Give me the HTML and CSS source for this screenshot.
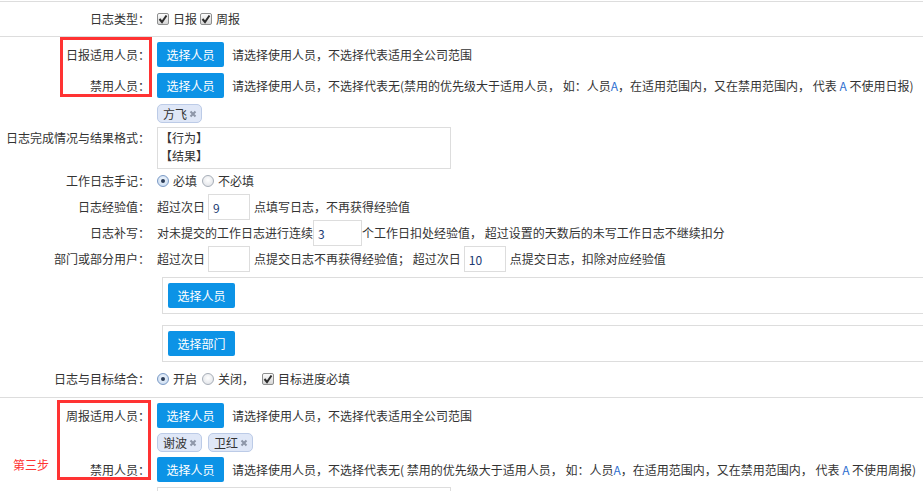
FILE: index.html
```html
<!DOCTYPE html>
<html lang="zh-CN">
<head>
    <meta charset="UTF-8">
    <meta name="viewport" content="width=device-width, initial-scale=1.0">
    <title>日志设置</title>
    <link rel="stylesheet" href="styles.css">
</head>
<body>
<div class="page">

    <!-- 日志类型 -->
    <div class="sec sec-type">
        <div class="row">
            <div class="label">日志类型：</div>
            <div class="field">
                <span class="cb"><svg viewBox="0 0 10 10"><path d="M1.5 5 L4 8 L8.5 1.5"/></svg></span>
                <span class="opt">日报</span>
                <span class="cb cb-next"><svg viewBox="0 0 10 10"><path d="M1.5 5 L4 8 L8.5 1.5"/></svg></span>
                <span class="opt">周报</span>
            </div>
        </div>
    </div>

    <!-- 日报设置 -->
    <div class="sec sec-daily">
        <div class="mark mark-daily"></div>

        <div class="row row-btn">
            <div class="label">日报适用人员：</div>
            <div class="field">
                <button class="btn">选择人员</button>
                <span class="hint">请选择使用人员，不选择代表适用全公司范围</span>
            </div>
        </div>

        <div class="row row-btn">
            <div class="label">禁用人员：</div>
            <div class="field">
                <button class="btn">选择人员</button>
                <span class="hint">请选择使用人员，不选择代表无(禁用的优先级大于适用人员， 如：人员<span class="a">A</span>，在适用范围内，又在禁用范围内， 代表 <span class="a">A</span> 不使用日报)</span>
            </div>
        </div>

        <div class="row row-tags">
            <div class="label"></div>
            <div class="field">
                <span class="tag">方飞<svg viewBox="0 0 8 8"><path d="M1.5 1.5 L6.5 6.5 M6.5 1.5 L1.5 6.5"/></svg></span>
            </div>
        </div>

        <div class="row row-text">
            <div class="label">日志完成情况与结果格式：</div>
            <div class="field">
                <textarea class="area">【行为】
【结果】</textarea>
            </div>
        </div>

        <div class="row row-radio">
            <div class="label">工作日志手记：</div>
            <div class="field">
                <span class="radio on"></span><span class="opt">必填</span>
                <span class="radio radio-next"></span><span class="opt">不必填</span>
            </div>
        </div>

        <div class="row row-input">
            <div class="label">日志经验值：</div>
            <div class="field">
                超过次日<input class="num" type="text" value="9">点填写日志，不再获得经验值
            </div>
        </div>

        <div class="row row-input">
            <div class="label">日志补写：</div>
            <div class="field">
                对未提交的工作日志进行连续<input class="num num-wide" type="text" value="3">个工作日扣处经验值， 超过设置的天数后的未写工作日志不继续扣分
            </div>
        </div>

        <div class="row row-input row-last-input">
            <div class="label">部门或部分用户：</div>
            <div class="field">
                超过次日<input class="num" type="text" value="">点提交日志不再获得经验值； 超过次日<input class="num" type="text" value="10">点提交日志，扣除对应经验值
            </div>
        </div>

        <div class="row row-box">
            <div class="label"></div>
            <div class="field">
                <div class="pick-box"><button class="btn">选择人员</button></div>
            </div>
        </div>

        <div class="row row-box">
            <div class="label"></div>
            <div class="field">
                <div class="pick-box"><button class="btn">选择部门</button></div>
            </div>
        </div>

        <div class="row row-goal">
            <div class="label">日志与目标结合：</div>
            <div class="field">
                <span class="radio on"></span><span class="opt">开启</span>
                <span class="radio radio-next"></span><span class="opt">关闭，</span>
                <span class="cb cb-goal"><svg viewBox="0 0 10 10"><path d="M1.5 5 L4 8 L8.5 1.5"/></svg></span>
                <span class="opt">目标进度必填</span>
            </div>
        </div>
    </div>

    <!-- 周报设置 -->
    <div class="sec sec-weekly">
        <div class="mark mark-weekly"></div>
        <div class="step">第三步</div>

        <div class="row row-btn">
            <div class="label">周报适用人员：</div>
            <div class="field">
                <button class="btn">选择人员</button>
                <span class="hint">请选择使用人员，不选择代表适用全公司范围</span>
            </div>
        </div>

        <div class="row row-tags">
            <div class="label"></div>
            <div class="field">
                <span class="tag">谢波<svg viewBox="0 0 8 8"><path d="M1.5 1.5 L6.5 6.5 M6.5 1.5 L1.5 6.5"/></svg></span>
                <span class="tag">卫红<svg viewBox="0 0 8 8"><path d="M1.5 1.5 L6.5 6.5 M6.5 1.5 L1.5 6.5"/></svg></span>
            </div>
        </div>

        <div class="row row-btn">
            <div class="label">禁用人员：</div>
            <div class="field">
                <button class="btn">选择人员</button>
                <span class="hint">请选择使用人员，不选择代表无( 禁用的优先级大于适用人员， 如：人员<span class="a">A</span>，在适用范围内，又在禁用范围内， 代表 <span class="a">A</span> 不使用周报)</span>
            </div>
        </div>

        <div class="row row-text">
            <div class="label"></div>
            <div class="field">
                <textarea class="area"></textarea>
            </div>
        </div>
    </div>

</div>
</body>
</html>
```

FILE: styles.css
```css
* {
    box-sizing: border-box;
}

body {
    margin: 0;
    font: 12px/18px "Noto Sans CJK SC", "Liberation Sans", sans-serif;
    color: #333;
    background: #fff;
    overflow: hidden;
}

.page {
    position: relative;
    width: 923px;
    height: 491px;
    overflow: hidden;
}

/* 分段 */
.sec {
    border-bottom: 1px solid #ddd;
}

.sec-type {
    margin-top: 1px;
    border-top: 1px solid #ddd;
    height: 36px;
    display: flex;
    align-items: center;
}

.sec-daily {
    padding: 5px 0 7px;
}

.sec-weekly {
    padding-top: 5px;
    border-bottom: none;
}

/* 行 */
.row {
    display: flex;
    align-items: center;
}

.label {
    width: 150px;
    flex-shrink: 0;
    text-align: right;
    white-space: nowrap;
}

.field {
    margin-left: 7px;
    display: flex;
    align-items: center;
    white-space: nowrap;
}

.row-btn {
    height: 25px;
    margin-bottom: 6px;
}

.sec-weekly .row-btn {
    margin-bottom: 5px;
}

.sec-weekly .row-btn + .row-text {
    margin-top: 1px;
}

.row-tags {
    height: 19px;
    margin-bottom: 4px;
}

.sec-weekly .row-tags {
    margin-bottom: 5px;
}

.row-text {
    align-items: flex-start;
    margin-bottom: 3px;
}

.row-text .label {
    padding-top: 2px;
}

.row-radio {
    height: 18px;
    margin-bottom: 4px;
}

.row-input {
    height: 26px;
}

.row-last-input {
    margin-bottom: 5px;
}

.row-box {
    margin-bottom: 11px;
}

.row-box + .row-goal {
    margin-top: -5px;
}

.row-goal {
    height: 22px;
}

/* 按钮 */
.btn {
    height: 25px;
    width: 67px;
    padding: 0;
    border: none;
    border-radius: 2px;
    background: #0c93e6;
    color: #fff;
    font: 12px "Noto Sans CJK SC", sans-serif;
    cursor: pointer;
}

.hint {
    margin-left: 8px;
}

.a {
    color: #2f6fd0;
}

/* 标签 */
.tag {
    display: inline-flex;
    align-items: center;
    height: 19px;
    padding: 0 4px 0 5px;
    margin-right: 6px;
    border: 1px solid #bccbe7;
    border-radius: 5px;
    background: #dfe7f7;
    color: #333;
}

.tag svg {
    width: 8px;
    height: 8px;
    margin-left: 2px;
}

.tag path {
    stroke: #8d96a8;
    stroke-width: 2;
    fill: none;
}

/* 文本框 */
.area {
    width: 294px;
    height: 42px;
    padding: 1px 2px;
    border: 1px solid #ddd;
    font: 12px/18px "Noto Sans CJK SC", sans-serif;
    color: #333;
    resize: none;
    overflow: hidden;
    display: block;
}

.num {
    width: 42px;
    height: 26px;
    margin: 0 4px 0 3px;
    padding: 0 4px;
    border: 1px solid #ddd;
    font: 12px "Noto Sans CJK SC", sans-serif;
    color: #203a72;
}

.num-wide {
    width: 49px;
    margin: 0;
}

.pick-box {
    width: 770px;
    height: 37px;
    margin-left: 5px;
    padding: 5px;
    border: 1px solid #ddd;
}

/* 复选框 / 单选框 */
.cb {
    display: inline-flex;
    align-items: center;
    justify-content: center;
    width: 12px;
    height: 12px;
    border: 1px solid #8e8f8f;
    border-radius: 2px;
    background: linear-gradient(#fdfdfd, #d6d6d6);
}

.cb svg {
    width: 10px;
    height: 10px;
}

.cb path {
    fill: none;
    stroke: #2d2d2d;
    stroke-width: 2;
}

.cb-next {
    margin-left: 3px;
}

.cb-goal {
    margin-left: 8px;
}

.radio {
    display: inline-flex;
    align-items: center;
    justify-content: center;
    width: 12px;
    height: 12px;
    border-radius: 50%;
    border: 1px solid #a7aeb8;
    background: radial-gradient(circle at 50% 40%, #fff, #dcdfe4);
}

.radio.on {
    border-color: #7c9bc6;
    background: radial-gradient(circle at 50% 40%, #f3f8fe, #c2d6ee);
}

.radio.on::after {
    content: "";
    width: 4px;
    height: 4px;
    border-radius: 50%;
    background: #2b3c57;
}

.radio-next {
    margin-left: 5px;
}

.opt {
    margin-left: 4px;
}

/* 标注 */
.mark {
    position: absolute;
    border: 3px solid #f33;
}

.mark-daily {
    left: 60px;
    top: 37px;
    width: 92px;
    height: 60px;
}

.mark-weekly {
    left: 57px;
    top: 400px;
    width: 94px;
    height: 80px;
}

.step {
    position: absolute;
    left: 13px;
    top: 456px;
    color: #f33;
}
```
